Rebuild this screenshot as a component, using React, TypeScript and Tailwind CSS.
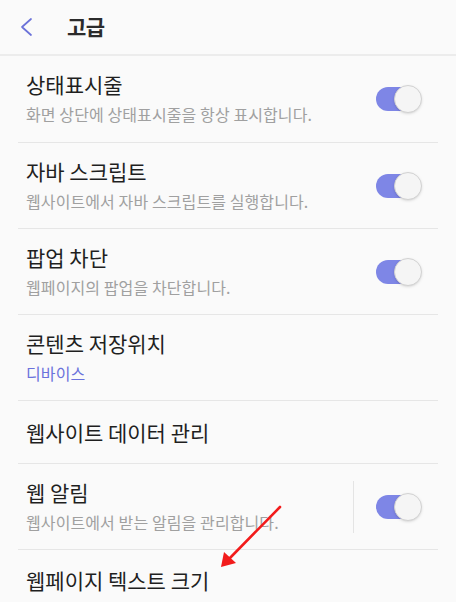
import React from 'react';

type Item = {
  id: string;
  title: string;
  sub?: string;
  subBlue?: boolean;
  toggle?: boolean;
  sep?: boolean;
};

const items: Item[] = [
  { id: 'status', title: '상태표시줄', sub: '화면 상단에 상태표시줄을 항상 표시합니다.', toggle: true },
  { id: 'js', title: '자바 스크립트', sub: '웹사이트에서 자바 스크립트를 실행합니다.', toggle: true },
  { id: 'popup', title: '팝업 차단', sub: '웹페이지의 팝업을 차단합니다.', toggle: true },
  { id: 'storage', title: '콘텐츠 저장위치', sub: '디바이스', subBlue: true },
  { id: 'data', title: '웹사이트 데이터 관리' },
  { id: 'noti', title: '웹 알림', sub: '웹사이트에서 받는 알림을 관리합니다.', toggle: true, sep: true },
  { id: 'textsize', title: '웹페이지 텍스트 크기' },
];

function Toggle() {
  return (
    <div className="relative w-[46px] h-[28px] flex items-center">
      <div className="w-[42px] h-[24px] rounded-full bg-[#7e86e6]" />
      <div className="absolute right-0 top-0 w-[28px] h-[28px] rounded-full bg-[#f5f5f5] border border-[#d2d2d2] shadow-sm" />
    </div>
  );
}

export default function App() {
  return (
    <div
      className="relative w-[456px] h-[602px] overflow-hidden bg-[#fafafa]"
      style={{ fontFamily: '"Noto Sans CJK KR", "Noto Sans", sans-serif' }}
    >
      {/* header */}
      <div className="h-[56px] flex items-center border-b-2 border-[#ececec]">
        <svg className="ml-[19px] w-[16px] h-[20px]" viewBox="0 0 16 20" fill="none">
          <path d="M12 2 L3 10 L12 18" stroke="#6b72d9" strokeWidth="1.7" strokeLinecap="round" strokeLinejoin="round" />
        </svg>
        <span className="ml-[32px] text-[21px] font-bold text-[#2b2b2b] tracking-[-0.5px]">고급</span>
      </div>

      {items.map((item, i) => (
        <div key={item.id}>
          {i > 0 && <div className="mx-[18px] h-px bg-[#e6e6e6]" />}
          <div
            className={`flex items-center pl-[26px] pr-[34px] ${
              item.sub ? (i === 0 ? 'h-[86px]' : 'h-[85px]') : i === items.length - 1 ? 'h-[60px]' : 'h-[62px]'
            }`}
          >
            <div className={`flex-1 flex flex-col ${item.sub ? 'gap-[4px] pb-[4px]' : ''}`}>
              <span className="text-[21px] leading-[30px] text-[#1f1f1f]">{item.title}</span>
              {item.sub && (
                <span
                  className={`text-[16px] leading-[22px] tracking-[0.1px] ${
                    item.subBlue ? 'text-[#6a72dc]' : 'text-[#a0a0a0]'
                  }`}
                >
                  {item.sub}
                </span>
              )}
            </div>
            {item.sep && <div className="w-px h-[52px] bg-[#e4e4e4] mr-[22px]" />}
            {item.toggle && <Toggle />}
          </div>
        </div>
      ))}

      {/* annotation arrow */}
      <svg className="absolute left-0 top-0 pointer-events-none" width="456" height="602">
        <line x1="280" y1="507" x2="228" y2="560" stroke="#f21b1b" strokeWidth="2.6" strokeLinecap="round" />
        <polygon points="221,567 224,552 236,563" fill="#f21b1b" />
      </svg>
    </div>
  );
}
